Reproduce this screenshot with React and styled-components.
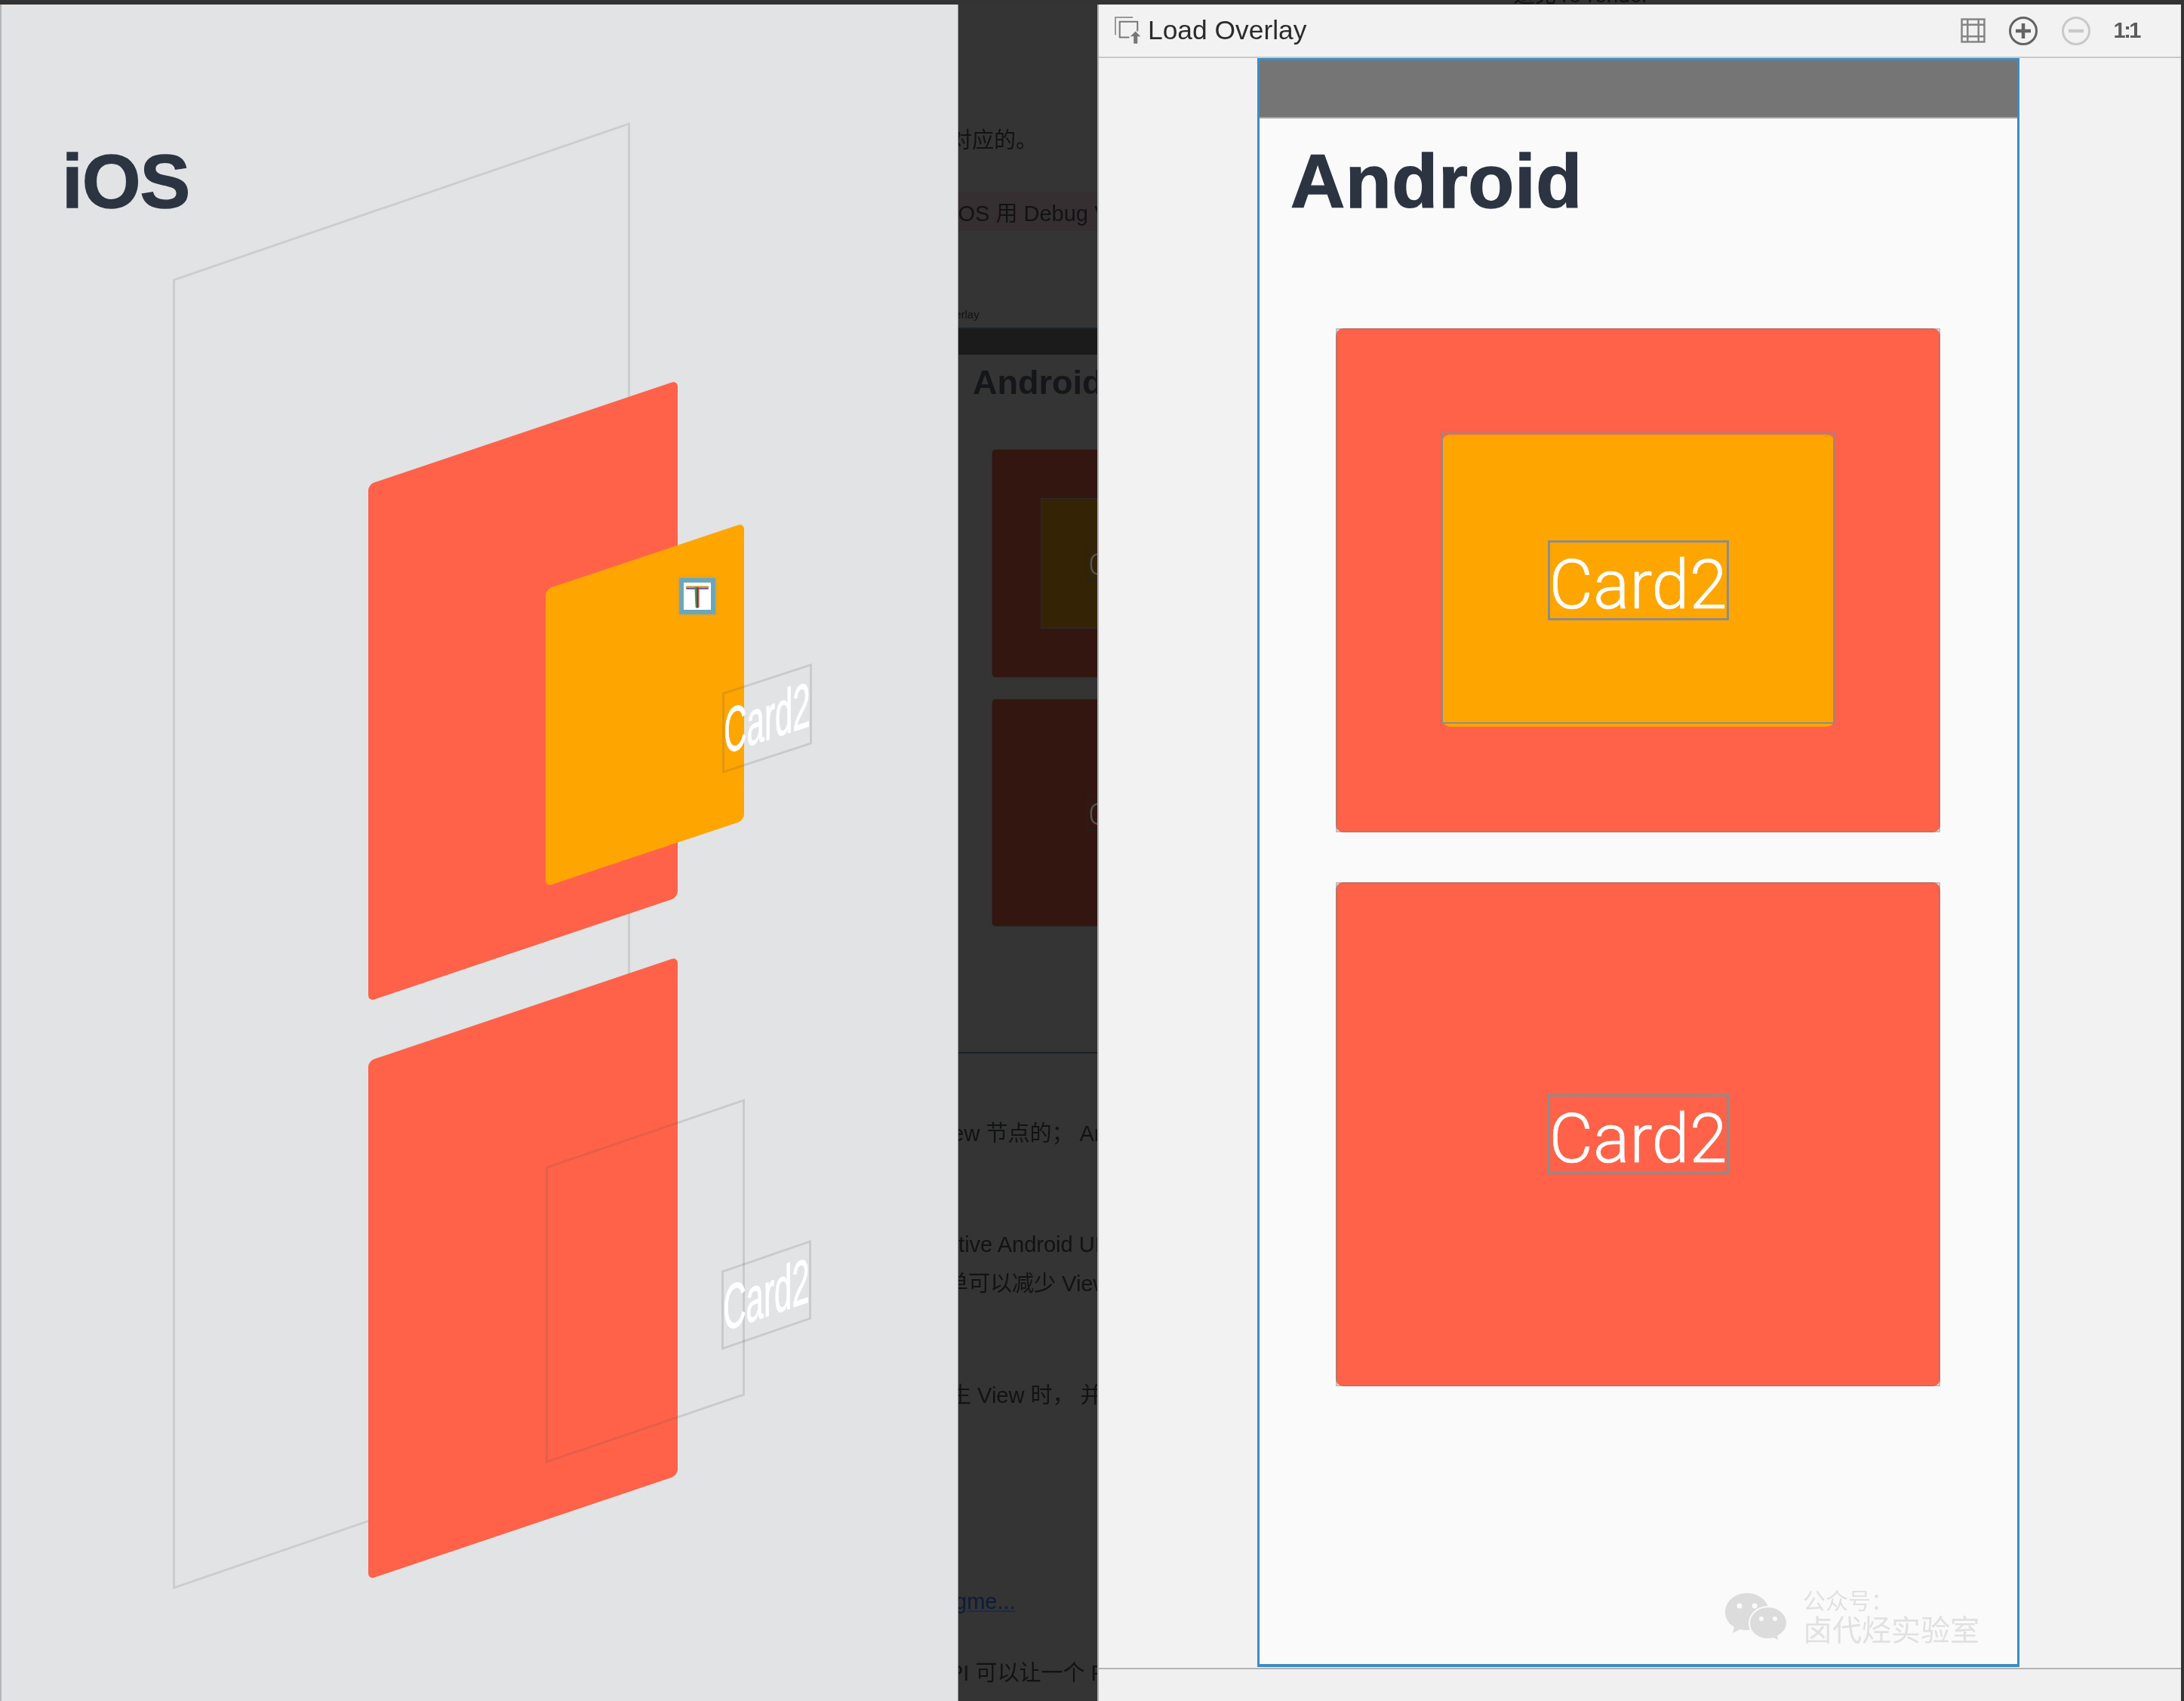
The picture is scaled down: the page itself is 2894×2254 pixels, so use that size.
import React from 'react';
import styled, { createGlobalStyle } from 'styled-components';

const TOMATO = '#ff6249';
const AMBER = '#ffa500';
const SANS = '"Liberation Sans", "Noto Sans CJK SC", sans-serif';

const Global = createGlobalStyle`
    html, body {
        margin: 0;
        background: #333;
    }
`;

const Page = styled.div`
    width: 2894px;
    height: 2254px;
    box-sizing: border-box;
    overflow: hidden;
    display: flex;
    align-items: stretch;
    background: #333;
    font-family: ${SANS};
`;

/* iOS debug view hierarchy */
const IosPanel = styled.section`
    position: relative;
    width: 1270px;
    box-sizing: border-box;
    margin-top: 6px;
    padding: 184px 0 0 80px;
    background: #e1e3e5;
    border-left: 2px solid #b5b6b8;
    border-right: 1px solid #97989a;
    filter: blur(0.6px);
    overflow: hidden;
`;
const PlatformTitle = styled.h1`
    margin: 0;
    font-size: 100px;
    line-height: 100px;
    font-weight: 700;
    letter-spacing: ${p => p.$spacing}px;
    color: #2c3442;
    -webkit-text-stroke: 1.4px #2c3442;
`;
const Plane = styled.div`
    position: absolute;
    left: ${p => p.$x - 2}px;
    top: ${p => p.$y - 6}px;
    width: ${p => p.$w}px;
    height: ${p => p.$h}px;
    box-sizing: border-box;
    transform-origin: 0 0;
    transform: matrix(1, ${p => -p.$rise / p.$w}, 0, 1, 0, 0);
    background: ${p => p.$fill || 'transparent'};
    border-radius: ${p => (p.$fill ? '8px' : '0')};
    border: ${p => (p.$fill ? 'none' : `3px solid ${p.$line || 'rgba(90, 90, 90, 0.18)'}`)};
    display: flex;
    align-items: center;
    justify-content: center;
`;
const PlaneText = styled.span`
    flex-shrink: 0;
    font-size: 84px;
    color: #fff;
    transform: scaleX(0.5);
    white-space: nowrap;
    -webkit-text-stroke: 1px #fff;
`;
const SelectedGlyph = styled.div`
    position: absolute;
    left: 904px;
    top: 766px;
    width: 36px;
    height: 36px;
    background: #fff;
    box-shadow: 0 0 0 6px #6ba7bb, 0 0 4px 7px rgba(107, 167, 187, 0.4);
    display: flex;
    svg {
        width: 36px;
        height: 36px;
    }
`;

/* dimmed article between the two panels */
const ArticlePanel = styled.section`
    width: 184px;
    flex-shrink: 0;
    margin-top: 6px;
    display: flex;
    flex-direction: column;
    overflow: hidden;
    background: #343434;
    filter: blur(0.5px);
`;
const Line = styled.div`
    flex-shrink: 0;
    margin-top: ${p => p.$gap}px;
    margin-left: ${p => p.$shift || 0}px;
    font-size: 29px;
    line-height: 40px;
    color: ${p => p.$link ? '#0e1c38' : '#111214'};
    text-decoration: ${p => p.$link ? 'underline' : 'none'};
    text-decoration-color: #1c2c48;
    white-space: nowrap;
`;
const CodeBand = styled.div`
    flex-shrink: 0;
    margin-top: ${p => p.$gap}px;
    height: 52px;
    display: flex;
    align-items: center;
    background: #352f31;
    font-size: 29px;
    color: #111214;
    white-space: nowrap;
`;
const BandText = styled.span`
    margin-left: -7px;
`;
const Caption = styled.div`
    flex-shrink: 0;
    margin: ${p => p.$gap}px 0 0 -24px;
    font-size: 15px;
    line-height: 20px;
    color: #111214;
`;
const MiniBar = styled.div`
    flex-shrink: 0;
    margin-top: 7px;
    height: 36px;
    box-sizing: border-box;
    background: #1b1b1b;
    border-top: 2px solid #1a2329;
`;
const MiniHeading = styled.div`
    flex-shrink: 0;
    margin: 14px 0 0 19px;
    font-size: 45px;
    line-height: 46px;
    font-weight: 700;
    color: #14161a;
    white-space: nowrap;
`;
const MiniCard = styled.div`
    flex-shrink: 0;
    width: 360px;
    height: ${p => p.$h}px;
    margin: ${p => p.$gap}px 0 0 45px;
    background: #331610;
    border-radius: 4px;
    outline: 1px solid #2b2b2b;
    display: flex;
    align-items: center;
    justify-content: center;
`;
const MiniInner = styled.div`
    width: 230px;
    height: 171px;
    background: #352305;
    outline: 1px solid #2b2b2b;
    display: flex;
    align-items: center;
    justify-content: center;
`;
const MiniLabel = styled.div`
    width: 108px;
    height: 47px;
    box-sizing: border-box;
    border: 1px solid #222;
    font-family: Roboto, sans-serif;
    font-weight: 300;
    font-size: 41px;
    line-height: 48px;
    text-align: center;
    color: #555;
`;
const Divider = styled.div`
    flex-shrink: 0;
    margin-top: ${p => p.$gap}px;
    height: 2px;
    background: #1c2125;
`;

/* layout inspector */
const InspectorPanel = styled.section`
    width: 1436px;
    flex-shrink: 0;
    display: flex;
    flex-direction: column;
    filter: blur(0.4px);
`;
const TopStrip = styled.div`
    height: 6px;
    overflow: hidden;
    background: #333;
    padding-left: 468px;
    color: #111;
    font-size: 28px;
    line-height: 28px;
    white-space: nowrap;
`;
const StripText = styled.div`
    margin-top: -20px;
`;
const StripBullet = styled.span`
    margin-right: 74px;
`;
const InspectorBody = styled.div`
    flex: 1;
    display: flex;
    flex-direction: column;
    background: #f2f2f2;
    border-left: 2px solid #b0b0b0;
`;
const Toolbar = styled.header`
    height: 71px;
    flex-shrink: 0;
    box-sizing: border-box;
    display: flex;
    align-items: center;
    padding: 0 55px 0 21px;
    border-bottom: 2px solid #c9c9c9;
`;
const LoadIcon = styled.svg`
    width: 37px;
    height: 37px;
    margin-right: 7px;
`;
const ToolbarTitle = styled.span`
    font-size: 35.4px;
    color: #2b2b2b;
`;
const ToolbarActions = styled.div`
    margin-left: auto;
    display: flex;
    align-items: center;
    gap: 30px;
`;
const ToolIcon = styled.svg`
    width: ${p => p.$size}px;
    height: ${p => p.$size}px;
`;
const RatioLabel = styled.span`
    font-size: 29px;
    font-weight: 700;
    letter-spacing: -2.5px;
    color: #5c5c5c;
`;
const Canvas = styled.div`
    height: 2135px;
    flex-shrink: 0;
    box-sizing: border-box;
    display: flex;
    justify-content: center;
    padding-right: 4px;
    border-bottom: 2px solid #b4b4b4;
`;
const Device = styled.div`
    position: relative;
    width: 1010px;
    height: 2132px;
    box-sizing: border-box;
    display: flex;
    flex-direction: column;
    background: #fafafa;
    border: solid #3d8bc6;
    border-width: 3px 3px 4px;
`;
const StatusBar = styled.div`
    height: 75px;
    flex-shrink: 0;
    background: #757575;
    border-bottom: 2px solid #a5a5a5;
`;
const DeviceHeader = styled.div`
    padding: 33px 0 0 41px;
`;
const CardColumn = styled.div`
    margin-top: 145px;
    padding-right: 1px;
    display: flex;
    flex-direction: column;
    align-items: center;
    gap: 66px;
`;
const Bordered = styled.div`
    position: relative;
    display: flex;
    align-items: center;
    justify-content: center;
    border-radius: 10px;
    &::after {
        content: '';
        position: absolute;
        inset: ${p => p.$frame || '0'};
        border: 2px solid ${p => p.$line};
    }
`;
const Card = styled(Bordered)`
    width: 801px;
    height: 668px;
    background: ${TOMATO};
`;
const InnerCard = styled(Bordered)`
    width: 520px;
    height: 387px;
    background: ${AMBER};
`;
const TextBox = styled.div`
    width: 240px;
    height: 106px;
    box-sizing: border-box;
    border: 3px solid #8c8c8c;
    padding-top: 14px;
    display: flex;
    align-items: center;
    justify-content: center;
    font-family: Roboto, sans-serif;
    font-weight: 300;
    font-size: 90px;
    line-height: 90px;
    color: #fff;
    -webkit-text-stroke: 0.5px #fff;
`;
const Watermark = styled.div`
    position: absolute;
    right: 50px;
    bottom: 24px;
    display: flex;
    align-items: center;
    gap: 20px;
    color: #e1e1e1;
`;
const WeChatMark = styled.svg`
    width: 84px;
    height: 66px;
`;
const WatermarkText = styled.div`
    display: flex;
    flex-direction: column;
    gap: 2px;
`;
const WatermarkSmall = styled.span`
    font-size: 30px;
    line-height: 34px;
`;
const WatermarkLarge = styled.span`
    font-size: 39px;
    line-height: 40px;
`;
const InspectorFooter = styled.div`
    flex: 1;
    background: #f0f0f0;
`;

const iosLayers = [
    { $x: 229, $y: 370, $w: 606, $h: 1736, $rise: 208, $line: '#cbcdcf' },
    { $x: 488, $y: 642, $w: 410, $h: 685, $rise: 138, $fill: TOMATO },
    { $x: 723, $y: 781, $w: 263, $h: 394, $rise: 88, $fill: AMBER },
    { $x: 957, $y: 918, $w: 119, $h: 107, $rise: 39, text: 'Card2' },
    { $x: 488, $y: 1406, $w: 410, $h: 687, $rise: 138, $fill: TOMATO },
    { $x: 723, $y: 1546, $w: 264, $h: 393, $rise: 90 },
    { $x: 956, $y: 1684, $w: 119, $h: 105, $rise: 41, text: 'Card2' },
];

const App = () => (
    <Page>
        <Global />
        <IosPanel>
            <PlatformTitle $spacing={-1}>iOS</PlatformTitle>
            {iosLayers.map(({ text, ...layer }) => (
                <Plane key={`${layer.$x}-${layer.$y}`} {...layer}>
                    {text && <PlaneText>{text}</PlaneText>}
                </Plane>
            ))}
            <SelectedGlyph>
                <svg viewBox="0 0 36 36" fill="none" strokeLinecap="round">
                    <path d="M4 6H32" stroke="#c9a227" strokeWidth="3" />
                    <path d="M4 8H32" stroke="#7a5ca8" strokeWidth="2" />
                    <path d="M16 7L17 32" stroke="#3f9a5c" strokeWidth="3" />
                    <path d="M19 7L19 32" stroke="#b5524c" strokeWidth="3" />
                    <path d="M18 7L18 33" stroke="#444" strokeWidth="1.5" />
                </svg>
            </SelectedGlyph>
        </IosPanel>

        <ArticlePanel>
            <Line $gap={160} $shift={-11}>对应的。</Line>
            <CodeBand $gap={48}><BandText>iOS 用 Debug View</BandText></CodeBand>
            <Caption $gap={101}>Overlay</Caption>
            <MiniBar />
            <MiniHeading>Android</MiniHeading>
            <MiniCard $gap={66} $h={301}>
                <MiniInner><MiniLabel>Card2</MiniLabel></MiniInner>
            </MiniCard>
            <MiniCard $gap={30} $h={300}>
                <MiniLabel>Card2</MiniLabel>
            </MiniCard>
            <Divider $gap={167} />
            <Line $gap={86} $shift={-34}>View 节点的； Android</Line>
            <Line $gap={107} $shift={-37}>Native Android UI</Line>
            <Line $gap={12} $shift={-16}>单可以减少 View</Line>
            <Line $gap={108} $shift={-12}>生 View 时， 并</Line>
            <Line $gap={233} $shift={-5} $link>gme...</Line>
            <Line $gap={55} $shift={-13}>PI 可以让一个 FlatList</Line>
        </ArticlePanel>

        <InspectorPanel>
            <TopStrip><StripText><StripBullet>•</StripBullet>避免 re-render</StripText></TopStrip>
            <InspectorBody>
                <Toolbar>
                    <LoadIcon viewBox="0 0 110 110" fill="none">
                        <path d="M3 72V3H72" stroke="#9a9a9a" strokeWidth="6" />
                        <path d="M20 84V20H90V58M20 82H58" stroke="#777" strokeWidth="6" />
                        <path d="M82 58L102 78H90V106H75V78H62Z" fill="#777" />
                    </LoadIcon>
                    <ToolbarTitle>Load Overlay</ToolbarTitle>
                    <ToolbarActions>
                        <ToolIcon $size={33} viewBox="0 0 32 32" fill="none" stroke="#858585" strokeWidth="2.4">
                            <rect x="1.5" y="1.5" width="29" height="29" />
                            <path d="M9 1.5V30.5M23 1.5V30.5M1.5 8.5H30.5M1.5 23.5H30.5" />
                        </ToolIcon>
                        <ToolIcon $size={40} viewBox="0 0 40 40" fill="none" stroke="#636363">
                            <circle cx="20" cy="20" r="17.5" strokeWidth="3" />
                            <path d="M20 10V30M10 20H30" strokeWidth="4.5" />
                        </ToolIcon>
                        <ToolIcon $size={40} viewBox="0 0 40 40" fill="none" stroke="#c9c9c9">
                            <circle cx="20" cy="20" r="17.5" strokeWidth="3" />
                            <path d="M10 20H30" strokeWidth="4.5" />
                        </ToolIcon>
                        <RatioLabel>1:1</RatioLabel>
                    </ToolbarActions>
                </Toolbar>
                <Canvas>
                    <Device>
                        <StatusBar />
                        <DeviceHeader>
                            <PlatformTitle $spacing={0.5}>Android</PlatformTitle>
                        </DeviceHeader>
                        <CardColumn>
                            <Card $line="rgba(130, 130, 130, 0.5)">
                                <InnerCard $line="#8c8c8c" $frame="-3px 0 4px -1px">
                                    <TextBox>Card2</TextBox>
                                </InnerCard>
                            </Card>
                            <Card $line="rgba(130, 130, 130, 0.5)">
                                <TextBox>Card2</TextBox>
                            </Card>
                        </CardColumn>
                        <Watermark>
                            <WeChatMark viewBox="0 0 84 66">
                                <path d="M30 1C14 1 1 12 1 26C1 35 6 42 13 46L11 54L21 49C24 50 27 50 30 50C46 50 59 39 59 26C59 12 46 1 30 1Z" fill="#dcdcdc" />
                                <path d="M58 19C44 19 33 29 33 41C33 53 44 62 58 62C60 62 62 62 65 61L73 65L71 58C78 54 83 48 83 41C83 29 72 19 58 19Z" fill="#dcdcdc" stroke="#fafafa" strokeWidth="2" />
                                <circle cx="20" cy="18" r="3.5" fill="#fafafa" />
                                <circle cx="40" cy="18" r="3.5" fill="#fafafa" />
                                <circle cx="49" cy="35" r="3" fill="#fafafa" />
                                <circle cx="67" cy="35" r="3" fill="#fafafa" />
                            </WeChatMark>
                            <WatermarkText>
                                <WatermarkSmall>公众号：</WatermarkSmall>
                                <WatermarkLarge>卤代烃实验室</WatermarkLarge>
                            </WatermarkText>
                        </Watermark>
                    </Device>
                </Canvas>
                <InspectorFooter />
            </InspectorBody>
        </InspectorPanel>
    </Page>
);

export default App;
